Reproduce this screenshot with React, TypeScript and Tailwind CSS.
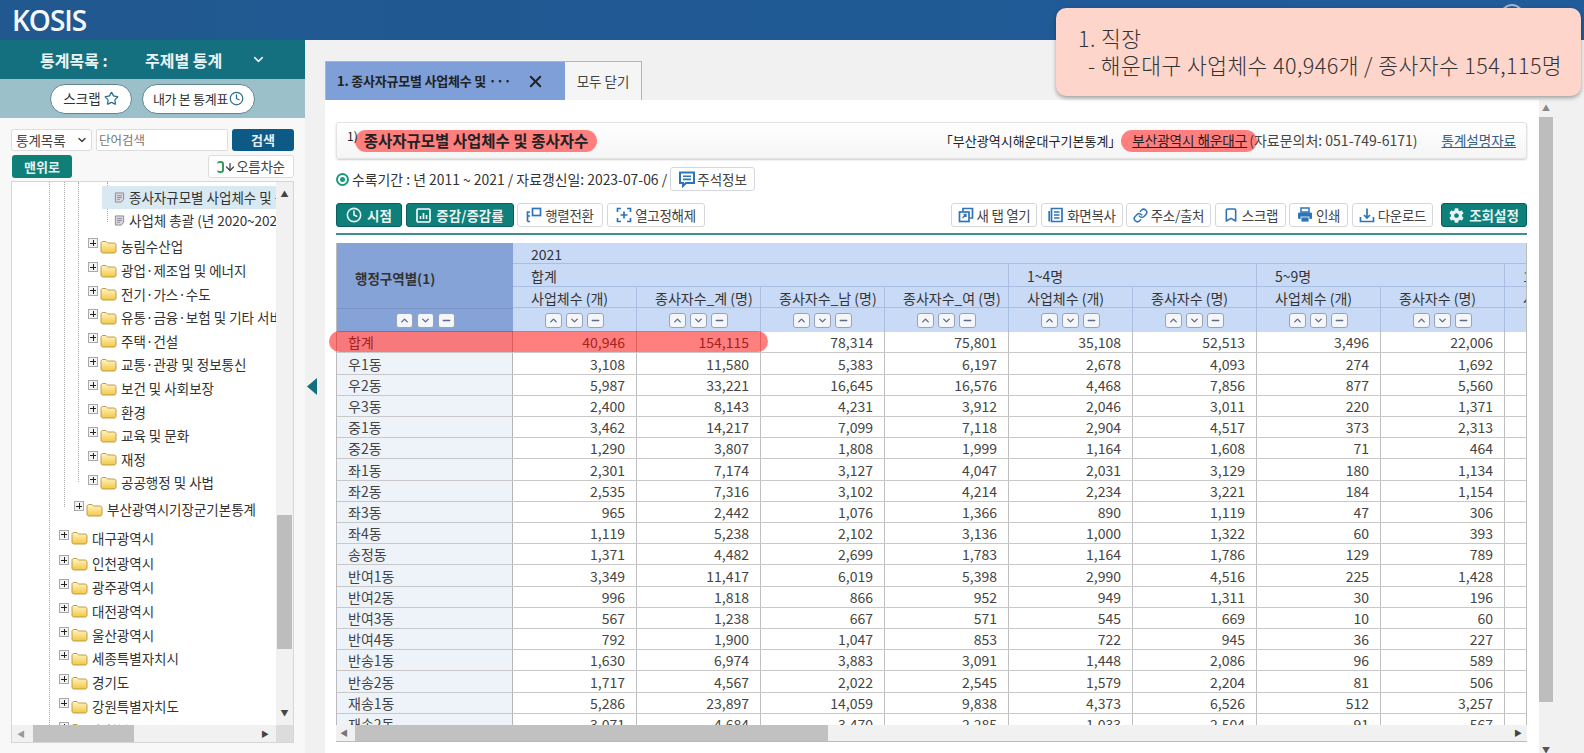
import React from 'react';
import { ArrowDown, Bookmark, ChevronDown, ChevronUp, Clock, Link, Minus, Star, X } from 'lucide-react';
import { FaCog } from 'react-icons/fa';

const FONT = "font-['Noto_Sans_CJK_KR','Noto_Sans',sans-serif]";
const BLUE = '#2e74b8';

const rows = [
  ['합계', '40,946', '154,115', '78,314', '75,801', '35,108', '52,513', '3,496', '22,006'],
  ['우1동', '3,108', '11,580', '5,383', '6,197', '2,678', '4,093', '274', '1,692'],
  ['우2동', '5,987', '33,221', '16,645', '16,576', '4,468', '7,856', '877', '5,560'],
  ['우3동', '2,400', '8,143', '4,231', '3,912', '2,046', '3,011', '220', '1,371'],
  ['중1동', '3,462', '14,217', '7,099', '7,118', '2,904', '4,517', '373', '2,313'],
  ['중2동', '1,290', '3,807', '1,808', '1,999', '1,164', '1,608', '71', '464'],
  ['좌1동', '2,301', '7,174', '3,127', '4,047', '2,031', '3,129', '180', '1,134'],
  ['좌2동', '2,535', '7,316', '3,102', '4,214', '2,234', '3,221', '184', '1,154'],
  ['좌3동', '965', '2,442', '1,076', '1,366', '890', '1,119', '47', '306'],
  ['좌4동', '1,119', '5,238', '2,102', '3,136', '1,000', '1,322', '60', '393'],
  ['송정동', '1,371', '4,482', '2,699', '1,783', '1,164', '1,786', '129', '789'],
  ['반여1동', '3,349', '11,417', '6,019', '5,398', '2,990', '4,516', '225', '1,428'],
  ['반여2동', '996', '1,818', '866', '952', '949', '1,311', '30', '196'],
  ['반여3동', '567', '1,238', '667', '571', '545', '669', '10', '60'],
  ['반여4동', '792', '1,900', '1,047', '853', '722', '945', '36', '227'],
  ['반송1동', '1,630', '6,974', '3,883', '3,091', '1,448', '2,086', '96', '589'],
  ['반송2동', '1,717', '4,567', '2,022', '2,545', '1,579', '2,204', '81', '506'],
  ['재송1동', '5,286', '23,897', '14,059', '9,838', '4,373', '6,526', '512', '3,257'],
  ['재송2동', '3,071', '4,684', '3,470', '2,285', '1,033', '2,504', '91', '567'],
];

const subHeads = ['사업체수 (개)', '종사자수_계 (명)', '종사자수_남 (명)', '종사자수_여 (명)', '사업체수 (개)', '종사자수 (명)', '사업체수 (개)', '종사자수 (명)'];

const tree: { label: string; pad: string; h: string }[] = [
  { label: '농림수산업', pad: 'pl-[76px]', h: 'h-[24px]' },
  { label: '광업·제조업 및 에너지', pad: 'pl-[76px]', h: 'h-[24px]' },
  { label: '전기·가스·수도', pad: 'pl-[76px]', h: 'h-[23.6px]' },
  { label: '유통·금융·보험 및 기타 서비스', pad: 'pl-[76px]', h: 'h-[23.6px]' },
  { label: '주택·건설', pad: 'pl-[76px]', h: 'h-[23.6px]' },
  { label: '교통·관광 및 정보통신', pad: 'pl-[76px]', h: 'h-[23.6px]' },
  { label: '보건 및 사회보장', pad: 'pl-[76px]', h: 'h-[23.6px]' },
  { label: '환경', pad: 'pl-[76px]', h: 'h-[23.6px]' },
  { label: '교육 및 문화', pad: 'pl-[76px]', h: 'h-[23.6px]' },
  { label: '재정', pad: 'pl-[76px]', h: 'h-[23.6px]' },
  { label: '공공행정 및 사법', pad: 'pl-[76px]', h: 'h-[23.6px]' },
  { label: '부산광역시기장군기본통계', pad: 'pl-[62px]', h: 'h-[30px]' },
  { label: '대구광역시', pad: 'pl-[47px]', h: 'h-[27px]' },
  { label: '인천광역시', pad: 'pl-[47px]', h: 'h-[23.8px]' },
  { label: '광주광역시', pad: 'pl-[47px]', h: 'h-[23.8px]' },
  { label: '대전광역시', pad: 'pl-[47px]', h: 'h-[23.8px]' },
  { label: '울산광역시', pad: 'pl-[47px]', h: 'h-[23.8px]' },
  { label: '세종특별자치시', pad: 'pl-[47px]', h: 'h-[23.8px]' },
  { label: '경기도', pad: 'pl-[47px]', h: 'h-[23.8px]' },
  { label: '강원특별자치도', pad: 'pl-[47px]', h: 'h-[23.8px]' },
  { label: '충청북도', pad: 'pl-[47px]', h: 'h-[23.8px]' },
];

function Folder() {
  return (
    <svg width="17" height="15" viewBox="0 0 17 15" className="shrink-0">
      <defs>
        <linearGradient id="fold" x1="0" y1="0" x2="0" y2="1">
          <stop offset="0" stopColor="#fff6c4" />
          <stop offset="1" stopColor="#f2c746" />
        </linearGradient>
      </defs>
      <path d="M1 4.5 C1 3 2 2.5 3 2.5 H6 L7.5 4 H14 C15.2 4 16 4.8 16 6 V12 C16 13.2 15.2 14 14 14 H3 C1.8 14 1 13.2 1 12 Z" fill="url(#fold)" stroke="#b8933a" strokeWidth="0.9" />
    </svg>
  );
}

function PlusBox() {
  return (
    <span className="relative flex h-[10px] w-[10px] shrink-0 -translate-y-[3px] items-center justify-center border border-[#a9a9a9] bg-[#f3f3f3]">
      <span className="absolute h-px w-[6px] bg-[#222]" />
      <span className="absolute h-[6px] w-px bg-[#222]" />
    </span>
  );
}

function DocIcon() {
  return (
    <svg width="11" height="11" viewBox="0 0 12 12" className="shrink-0">
      <path d="M1.5 1 H10.5 V8 L8 11 H1.5 Z" fill="#d9d4dc" stroke="#8c8590" />
      <path d="M3.5 4 H8.5 M3.5 6 H8.5 M3.5 8 H6.5" stroke="#7d7682" strokeWidth="0.8" />
    </svg>
  );
}

function Svg({ children }: { children: React.ReactNode }) {
  return (
    <svg width="16" height="16" viewBox="0 0 16 16" fill="none" stroke={BLUE} strokeWidth="1.7" className="shrink-0">
      {children}
    </svg>
  );
}

const NewTabIcon = () => (
  <Svg>
    <path d="M5 4 V1.5 H14.5 V11 H12" />
    <rect x="1.5" y="5" width="9.5" height="9.5" />
    <path d="M4.5 11 L8 7.5 M5.5 7.5 H8 V10" strokeWidth="1.3" />
  </Svg>
);
const CopyScreenIcon = () => (
  <Svg>
    <path d="M3.5 1.5 H14 V14.5 H3.5 Z" />
    <path d="M1.2 4 V14.5" />
    <path d="M6 5 H11.5 M6 8 H11.5 M6 11 H11.5" strokeWidth="1.3" />
  </Svg>
);
const PivotIcon = () => (
  <Svg>
    <rect x="6.5" y="1.5" width="8" height="7" />
    <path d="M4 5 H1.5 V14.5 M1.5 14.5 H4 M1.5 9 H4" />
  </Svg>
);
const UnfreezeIcon = () => (
  <Svg>
    <path d="M5 1.5 H1.5 V5 M11 1.5 H14.5 V5 M5 14.5 H1.5 V11 M11 14.5 H14.5 V11" />
    <path d="M8 4.5 V11.5 M4.5 8 H11.5" />
  </Svg>
);
const PrintIcon = () => (
  <svg width="16" height="16" viewBox="0 0 16 16" className="shrink-0">
    <rect x="4" y="1" width="8" height="4" fill="none" stroke={BLUE} strokeWidth="1.5" />
    <rect x="1" y="5.5" width="14" height="6.5" rx="1" fill={BLUE} />
    <rect x="4" y="10" width="8" height="5" fill={BLUE} stroke="#fff" strokeWidth="0.8" />
  </svg>
);
const DownloadIcon = () => (
  <Svg>
    <path d="M1.5 10 V14.5 H14.5 V10" />
    <path d="M8 1.5 V11 M5 8 L8 11 L11 8" />
  </Svg>
);
const NoteIcon = () => (
  <svg width="18" height="18" viewBox="0 0 18 18" fill="none" stroke={BLUE} strokeWidth="2" className="shrink-0">
    <path d="M2 2.5 H16 V13 H8 L5 16 V13 H2 Z" />
    <path d="M5 6.2 H13 M5 9.4 H13" strokeWidth="1.6" />
  </svg>
);
const StatIcon = () => (
  <svg width="15" height="15" viewBox="0 0 15 15" fill="none" stroke="#fff" className="shrink-0">
    <rect x="1" y="1" width="13" height="13" rx="1" strokeWidth="1.6" />
    <path d="M4.5 11 V8 M7.5 11 V5 M10.5 11 V7" strokeWidth="1.6" />
  </svg>
);

function SortButtons() {
  return (
    <div className="flex items-center justify-center gap-[4px]">
      {[ChevronUp, ChevronDown, Minus].map((Icon, i) => (
        <span key={i} className="flex h-[15px] w-[17px] items-center justify-center rounded-[3px] border border-[#9aa3b5] bg-[#f4f6fa] text-[#5d6b84]">
          <Icon size={11} strokeWidth={3} />
        </span>
      ))}
    </div>
  );
}

function TealButton({ icon, label, className }: { icon: React.ReactNode; label: string; className: string }) {
  return (
    <button className={`flex h-6 shrink-0 items-center justify-center gap-[5px] rounded-[3px] border border-[#0a5f5c] bg-[#0f7f79] text-[13.5px] font-bold text-[#e6f3f2] ${className}`}>
      {icon}
      {label}
    </button>
  );
}

function WhiteButton({ icon, label, className }: { icon: React.ReactNode; label: string; className: string }) {
  return (
    <button className={`flex h-6 shrink-0 items-center justify-center gap-[3px] whitespace-nowrap rounded-[3px] border border-[#d4d8de] bg-white text-[13.5px] tracking-[-0.3px] text-[#444] ${className}`}>
      {icon}
      {label}
    </button>
  );
}

function Sidebar() {
  return (
    <aside className="flex h-full w-[305px] shrink-0 flex-col bg-[#f8f8f8]">
      <div className="flex h-[39px] shrink-0 items-center bg-[#14707f] pl-[40px] text-[16px] font-bold text-[#e8f4f4]">
        <span className="w-[105px]">통계목록 :</span>
        <span className="w-[106px]">주제별 통계</span>
        <ChevronDown size={15} strokeWidth={2.5} />
      </div>
      <div className="flex h-[39px] shrink-0 items-center gap-[10px] bg-[#9cc0ca] pl-[50px]">
        <button className="flex h-[30px] w-[82px] items-center justify-center gap-[3px] rounded-full border border-[#5f8593] bg-white text-[13.5px] text-[#333]">
          스크랩 <Star size={15} className="text-[#2f6d8a]" />
        </button>
        <button className="flex h-[30px] w-[113px] items-center justify-center gap-[1px] rounded-full border border-[#5f8593] bg-white text-[13px] tracking-[-0.3px] text-[#333]">
          내가 본 통계표 <Clock size={15} className="text-[#2f6d8a]" />
        </button>
      </div>
      <div className="flex flex-col px-[11px] pt-[11px]">
        <div className="flex h-[22px] shrink-0 gap-1">
          <div className="flex w-[81px] items-center justify-between rounded-[3px] border border-[#ddd] bg-white pl-1 pr-[3px] text-[13.5px] text-[#444]">
            통계목록 <ChevronDown size={12} strokeWidth={3} />
          </div>
          <div className="flex w-[132px] items-center rounded-[2px] border border-[#ddd] bg-white pl-[2px] text-[12.5px] text-[#777]">단어검색</div>
          <button className="w-[62px] rounded-[3px] bg-[#0d5a87] text-[13px] font-bold text-[#e6f0f5]">검색</button>
        </div>
        <div className="mt-1 flex h-[23px] shrink-0 justify-between pl-px">
          <button className="w-[60px] rounded-[3px] bg-[#0f8078] text-[13px] font-bold text-[#e6f3f2]">맨위로</button>
          <button className="flex w-[86px] items-center justify-center rounded-[3px] border border-[#ddd] bg-white text-[13.5px] tracking-[-0.3px] text-[#444]">
            <span className="h-[12px] w-[7px] rounded-[3px] border-2 border-l-0 border-[#3b9a55]" />
            <ArrowDown size={12} strokeWidth={2.5} />
            오름차순
          </button>
        </div>
        <TreeBox />
      </div>
    </aside>
  );
}

function TreeBox() {
  return (
    <div className="relative mt-[3px] h-[562px] w-[283px] shrink-0 overflow-hidden border border-[#d6d6d6] bg-white">
      {/* dotted guides */}
      <span className="absolute left-[37px] top-0 h-[543px] border-l border-dotted border-[#aaa]" />
      <span className="absolute left-[52px] top-0 h-[325px] border-l border-dotted border-[#aaa]" />
      <span className="absolute left-[66px] top-0 h-[300px] border-l border-dotted border-[#aaa]" />
      <span className="absolute left-[95px] top-0 h-[40px] border-l border-dotted border-[#aaa]" />
      <div className="relative h-[543px] w-[265px] overflow-hidden pt-[4px] text-[13.5px] text-[#333]">
        <div className="ml-[90px] flex h-[23px] items-center gap-[4px] overflow-hidden whitespace-nowrap bg-[#d9e9f2] pl-[12px]">
          <DocIcon />
          종사자규모별 사업체수 및 종사자수
        </div>
        <div className="ml-[90px] flex h-[23px] items-center gap-[4px] overflow-hidden whitespace-nowrap pl-[12px]">
          <DocIcon />
          사업체 총괄 (년 2020~2021)
        </div>
        <div className="h-[2px]" />
        {tree.map((t) => (
          <div key={t.label} className={`flex items-center gap-[2px] whitespace-nowrap ${t.h} ${t.pad}`}>
            <PlusBox />
            <Folder />
            <span className="ml-[2px]">{t.label}</span>
          </div>
        ))}
      </div>
      {/* scrollbars */}
      <div className="absolute right-0 top-0 flex h-[543px] w-[17px] flex-col items-center bg-[#f1f1f1]">
        <span className="mt-2 text-[8px] leading-none text-[#444]">▲</span>
        <span className="absolute left-[1px] top-[333px] h-[134px] w-[15px] bg-[#bdbdbd]" />
        <span className="absolute bottom-[8px] text-[8px] leading-none text-[#444]">▼</span>
      </div>
      <div className="absolute bottom-0 left-0 flex h-[17px] w-full items-center bg-[#f1f1f1]">
        <span className="ml-[5px] text-[8px] text-[#999]">◀</span>
        <span className="ml-[8px] h-full w-[101px] bg-[#c1c1c1]" />
        <span className="absolute right-[24px] text-[8px] text-[#444]">▶</span>
        <span className="absolute right-0 h-full w-[17px] bg-[#dcdcdc]" />
      </div>
    </div>
  );
}

function DataTable() {
  const grid = 'grid grid-cols-[176px_repeat(8,124px)_23px]';
  const line = 'border-[#a9bfe2]';
  return (
    <div className="relative mt-[8px] w-[1191px] shrink-0">
      <div className="h-[482px] overflow-hidden border-l border-r border-[#bbb] text-[14px] text-[#444]">
        <div className={`${grid} h-[89px] grid-rows-[21px_23px_21px_24px] bg-[#c9daf6] text-[#333]`}>
          <div className="row-span-3 flex items-center bg-[#86a3d8] pl-[18px] pt-[5px] text-[13.5px] font-bold">행정구역별(1)</div>
          <div className={`col-span-9 flex items-center border-b ${line} pl-[18px] pt-[3px]`}>2021</div>
          <div className={`col-span-4 flex items-center border-b border-r ${line} pl-[18px] pt-[2px]`}>합계</div>
          <div className={`col-span-2 flex items-center border-b border-r ${line} pl-[18px] pt-[2px]`}>1~4명</div>
          <div className={`col-span-2 flex items-center border-b border-r ${line} pl-[18px] pt-[2px]`}>5~9명</div>
          <div className={`flex items-center border-b ${line} pl-[18px] pt-[2px]`}>1</div>
          {subHeads.map((h, i) => (
            <div key={i} className={`flex items-center overflow-hidden whitespace-nowrap border-b border-r ${line} pl-[18px] pt-[3px]`}>{h}</div>
          ))}
          <div className={`flex items-center overflow-hidden border-b ${line} pl-[18px] pt-[3px]`}>사</div>
          <div className="flex items-center justify-center border-t border-[#7a94c6] bg-[#86a3d8]"><SortButtons /></div>
          {subHeads.map((_, i) => (
            <div key={i} className={`flex items-center justify-center border-r ${line}`}><SortButtons /></div>
          ))}
          <div />
        </div>
        {rows.map((r, n) => (
          <div key={r[0]} className={`${grid} border-b border-[#c8c8c8] leading-none ${n % 5 === 1 ? 'h-[22px]' : 'h-[21px]'}`}>
            <div className="flex items-center border-r border-[#b5b5b5] bg-[#eef3f9] pl-[11px]">{r[0]}</div>
            {r.slice(1).map((v, i) => (
              <div key={i} className="flex items-center justify-end border-r border-[#c0c0c0] pr-[11px]">{v}</div>
            ))}
            <div />
          </div>
        ))}
      </div>
      {/* 합계 row highlight */}
      <div className="absolute left-[-7px] top-[88px] h-[21px] w-[439px] rounded-full bg-[#ff0000]/50" />
      <div className="flex h-[17px] items-center border-b border-[#bbb] bg-[#f1f1f1]">
        <span className="ml-[4px] text-[8px] text-[#777]">◀</span>
        <span className="ml-[7px] h-full w-[473px] bg-[#c1c1c1]" />
        <span className="ml-auto mr-[5px] text-[8px] text-[#444]">▶</span>
      </div>
    </div>
  );
}

function Main() {
  return (
    <main className="flex min-w-0 flex-1 bg-[#f1f1f1]">
      <div className="flex w-[20px] shrink-0 items-center pb-[20px] pl-[2px]">
        <svg width="10" height="17" viewBox="0 0 10 17"><path d="M10 0 V17 L0 8.5 Z" fill="#14707f" /></svg>
      </div>
      <div className="flex w-[1214px] shrink-0 flex-col pt-[21px]">
        <div className="flex h-[39px] shrink-0">
          <div className="flex w-[240px] items-center justify-between border-t border-l border-[#b5b5b5] bg-[#7f9fd9] pl-[11px] pr-[20px] text-[13px] font-bold tracking-[-0.2px] text-[#222]">
            1. 종사자규모별 사업체수 및 ···
            <X size={19} strokeWidth={2.5} />
          </div>
          <div className="flex w-[77px] items-center justify-center border-t border-r border-[#b5b5b5] bg-[#f5f5f5] text-[13.5px] text-[#444]">모두 닫기</div>
        </div>
        <div className="flex min-h-0 flex-1 flex-col bg-white px-[11px] pt-[22px]">
          <div className="flex h-[37px] w-[1191px] shrink-0 items-center whitespace-nowrap rounded-[3px] border border-[#e3e3e3] bg-gradient-to-b from-white to-[#f5f5f5] pl-[10px] pr-[10px] shadow-[0_1px_2px_rgba(0,0,0,0.2)]">
            <span className="-translate-y-[5px] text-[12px] text-[#222]">1)</span>
            <span className="-ml-[3px] flex h-[22px] items-center rounded-full bg-[#ff7f7f] px-[9px] text-[15.5px] font-bold text-[#222]">종사자규모별 사업체수 및 종사자수</span>
            <span className="ml-auto text-[13px] text-[#222]">「부산광역시해운대구기본통계」</span>
            <span className="flex h-[22px] items-center rounded-full bg-[#ff7f7f] pl-[11px] pr-[10px] text-[13.5px] text-[#222] underline">부산광역시 해운대구</span>
            <span className="-ml-[8px] text-[14px] text-[#444]">(자료문의처: 051-749-6171)</span>
            <span className="ml-[24px] text-[13.5px] text-[#2f5f85] underline">통계설명자료</span>
          </div>
          <div className="mt-[8px] flex h-6 shrink-0 items-center whitespace-nowrap text-[13.9px] text-[#333]">
            <span className="mr-[3px] flex h-[13px] w-[13px] items-center justify-center rounded-full border-2 border-[#1c9a80]"><span className="h-[5px] w-[5px] rounded-full bg-[#1c9a80]" /></span>
            수록기간 : 년 2011 ~ 2021 / 자료갱신일: 2023-07-06 /
            <button className="ml-[3px] flex h-6 w-[85px] items-center justify-center gap-[1px] rounded-[3px] border border-[#d4d8de] bg-white text-[13.5px] text-[#444]">
              <NoteIcon />주석정보
            </button>
          </div>
          <div className="mt-[12px] flex h-6 w-[1191px] shrink-0 items-center">
            <TealButton className="w-[66px]" icon={<Clock size={16} strokeWidth={2.4} />} label="시점" />
            <TealButton className="ml-[4px] w-[108px]" icon={<StatIcon />} label="증감/증감률" />
            <WhiteButton className="ml-[3px] w-[86px]" icon={<PivotIcon />} label="행렬전환" />
            <WhiteButton className="ml-[4px] w-[98px]" icon={<UnfreezeIcon />} label="열고정해제" />
            <WhiteButton className="ml-auto w-[86px]" icon={<NewTabIcon />} label="새 탭 열기" />
            <WhiteButton className="ml-[4px] w-[82px]" icon={<CopyScreenIcon />} label="화면복사" />
            <WhiteButton className="ml-[3px] w-[85px]" icon={<Link size={15} strokeWidth={2.4} color={BLUE} />} label="주소/출처" />
            <WhiteButton className="ml-[4px] w-[71px]" icon={<Bookmark size={16} strokeWidth={2.4} color={BLUE} />} label="스크랩" />
            <WhiteButton className="ml-[3px] w-[59px]" icon={<PrintIcon />} label="인쇄" />
            <WhiteButton className="ml-[4px] w-[81px]" icon={<DownloadIcon />} label="다운로드" />
            <TealButton className="ml-[8px] w-[86px]" icon={<FaCog size={15} />} label="조회설정" />
          </div>
          <div className="mt-[6px] h-[2px] w-[1191px] shrink-0 bg-[#3f8f8c]" />
          <DataTable />
        </div>
      </div>
      <div className="relative w-[16px] shrink-0 bg-[#f1f1f1] pt-[77px]">
        <span className="absolute left-[3px] top-[64px] text-[8px] leading-none text-[#888]">▲</span>
        <div className="h-[585px] w-[14px] bg-[#bdbdbd]" />
        <span className="absolute bottom-[-1px] left-[3px] text-[8px] leading-none text-[#555]">▼</span>
      </div>
    </main>
  );
}

export default function App() {
  return (
    <div className={`relative flex h-[753px] w-[1584px] flex-col overflow-hidden bg-[#f1f1f1] ${FONT}`}>
      <header className="flex h-10 shrink-0 items-center bg-gradient-to-r from-[#21588f] to-[#1f5c9a] pl-[12px] pr-[60px]">
        <span className="font-['Open_Sans',sans-serif] text-[28px] font-semibold tracking-[-1px] text-[#f4f7fb]">KOSIS</span>
        <span className="ml-auto h-6 w-6 self-start mt-[4px] rounded-full border-2 border-[#9fb6d0]" />
      </header>
      <div className="flex min-h-0 flex-1">
        <Sidebar />
        <Main />
      </div>
      {/* annotation callout */}
      <div className="absolute left-[1056px] top-[8px] h-[88px] w-[525px] rounded-[10px] bg-[#fdd5cb] pl-[22px] pt-[16px] text-[21.5px] font-light leading-[27px] tracking-[0.45px] text-[#333] shadow-[0_2px_4px_rgba(0,0,0,0.35)]">
        <div>1. 직장</div>
        <div className="whitespace-nowrap pl-[10px]">- 해운대구 사업체수 40,946개 / 종사자수 154,115명</div>
      </div>
    </div>
  );
}
